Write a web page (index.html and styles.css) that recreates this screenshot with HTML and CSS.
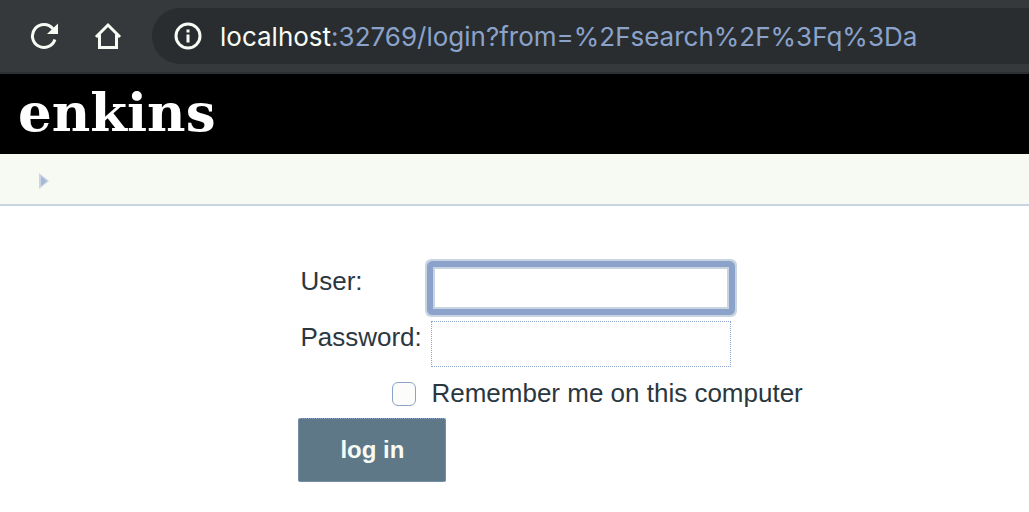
FILE: index.html
```
<!DOCTYPE html>
<html lang="en">
<head>
<meta charset="utf-8">
<meta name="viewport" content="width=device-width, initial-scale=1">
<title>Login</title>
<link rel="stylesheet" href="styles.css">
</head>
<body>
<div class="toolbar">
  <button class="tool" type="button" aria-label="Reload">
    <svg viewBox="0 0 28 28" width="28" height="28"><path d="M24.900 17.500A11.500 11.500 0 1 1 23 6.900" fill="none" stroke="currentColor" stroke-width="3"/><path d="M28 1.500V12H17z" fill="currentColor"/></svg>
  </button>
  <button class="tool" type="button" aria-label="Home">
    <svg viewBox="0 0 28 28" width="28" height="28"><path d="M2 15L14 3l12 12M5.500 12.500V25.500h17V12.500" fill="none" stroke="currentColor" stroke-width="3"/></svg>
  </button>
  <div class="address">
    <svg class="info" viewBox="0 0 28 28" width="28" height="28"><circle cx="14" cy="14" r="12" fill="none" stroke="currentColor" stroke-width="3"/><path d="M12.500 7.500h3v3h-3zM12.500 12.500h3v8h-3z" fill="currentColor"/></svg>
    <span class="url"><span class="host">localhost</span>:32769/login?from=%2Fsearch%2F%3Fq%3Da</span>
  </div>
</div>
<header class="header"><span class="logo">enkins</span></header>
<nav class="breadcrumbs" aria-label="Breadcrumbs">
  <svg viewBox="0 0 10 16" width="10" height="16"><path d="M0 0l10 8-10 8z" fill="#c9d5e6"/><path d="M2 3l6 5-6 5z" fill="#a9b8d4"/></svg>
</nav>
<main class="main">
  <form class="login">
    <label class="name" for="user">User:</label>
    <input class="field focused" id="user" type="text">
    <label class="name" for="password">Password:</label>
    <input class="field" id="password" type="password">
    <input class="check" id="remember" type="checkbox">
    <label class="remember" for="remember">Remember me on this computer</label>
    <button class="submit" type="button">log in</button>
  </form>
</main>
</body>
</html>
```
FILE: styles.css
```
* { box-sizing: border-box; }
body {
  margin: 0;
  background: #fff;
  color: #2b373e;
  font-family: "Liberation Sans", Arial, sans-serif;
  font-size: 26px;
  line-height: 32px;
}
svg { display: block; flex: none; }
.toolbar {
  display: flex;
  align-items: center;
  gap: 36px;
  padding: 8px 0 8px 30px;
  background: #35393c;
  border-bottom: 2px solid #2b2f32;
}
.tool {
  padding: 0;
  border: 0;
  background: none;
  color: #f8fbf4;
}
.address {
  flex: 1;
  display: flex;
  align-items: center;
  gap: 18px;
  height: 56px;
  margin-left: -6px;
  padding-left: 22px;
  border-radius: 28px 0 0 28px;
  background: #292d30;
  color: #f8fbf4;
  white-space: nowrap;
}
.url {
  padding-top: 1px;
  color: #8ba3cb;
  font-family: Inter, Roboto, sans-serif;
  font-size: 26px;
}
.host { color: #f8fbf4; }
.header {
  display: flex;
  align-items: center;
  height: 80px;
  padding: 0 18px 4px;
  background: #000;
}
.logo {
  color: #fff;
  font-family: "DejaVu Serif", Georgia, serif;
  font-size: 53px;
  font-weight: bold;
}
.breadcrumbs {
  display: flex;
  align-items: center;
  height: 52px;
  padding: 4px 39px 0;
  background: #f7faf3;
  border-bottom: 2px solid #c9d4e1;
}
.main { padding: 59px 20px 30px 29%; }
.login {
  display: grid;
  grid-template-columns: 124px 300px;
  column-gap: 9px;
  row-gap: 10px;
}
.name { padding-left: 2px; white-space: nowrap; }
.field {
  width: 100%;
  height: 46px;
  padding: 0 8px;
  border: 1px dotted #8ba3cb;
  background: #fff;
  font: inherit;
  outline: 0;
}
.focused {
  border: 2px solid #8ba3cb;
  box-shadow: inset 0 0 0 2px #c9d4e1, 0 0 0 4px #8ba3cb, 0 0 0 6px #c9d4e1;
  border-radius: 2px;
}
.check {
  appearance: none;
  justify-self: end;
  width: 24px;
  height: 24px;
  margin: 5px 6px 0 0;
  border: 1px solid #8ba3cb;
  border-radius: 6px;
  background: #fcfcfa;
}
.remember { white-space: nowrap; }
.submit {
  width: 148px;
  height: 64px;
  margin-top: -1px;
  border: 1px dotted #8ba3cb;
  border-radius: 2px;
  background: #5e7888;
  color: #f8fbf4;
  font: bold 24px/32px "Liberation Sans", Arial, sans-serif;
}
```
